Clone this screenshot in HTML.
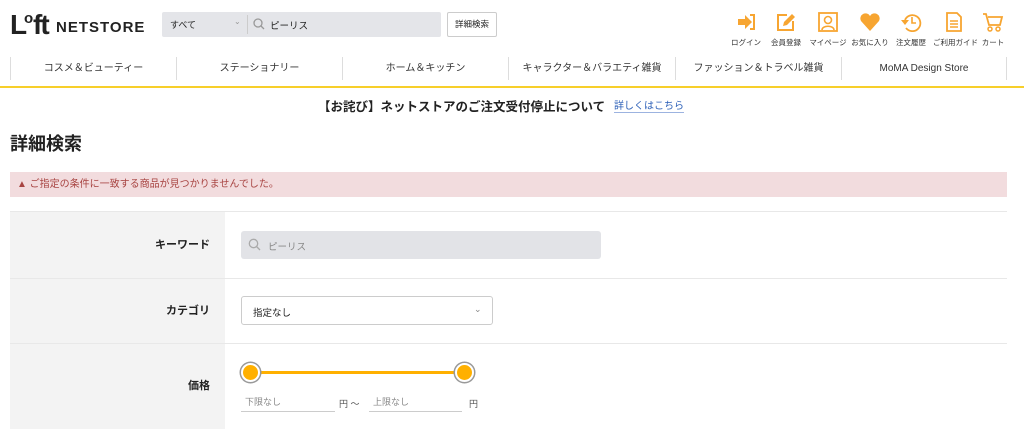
<!DOCTYPE html>
<html><head><meta charset="utf-8"><style>
*{margin:0;padding:0;box-sizing:border-box}
body{width:1024px;height:429px;overflow:hidden;background:#fff;font-family:"Liberation Sans","Noto Sans CJK JP",sans-serif;color:#222;position:relative}
.a{position:absolute}
.nav{top:57px;height:23px;font-size:10px;color:#333;text-align:center;line-height:23px;border-left:1px solid #ddd}
.ic{top:12px;width:40px;text-align:center;font-size:7.5px;color:#333;white-space:nowrap}
.ic svg{display:block;margin:0 auto 5px}
.lbl{left:10px;width:215px;background:#f3f3f3;font-size:11px;font-weight:bold;text-align:right;padding-right:15px}
.ln{left:10px;width:997px;height:1px;background:#e8e8e8}
</style></head><body>
<div class="a" style="left:10px;top:10px;font-size:28px;font-weight:bold;letter-spacing:-2px;line-height:30px">L</div>
<div class="a" style="left:24px;top:11px;font-size:15px;font-weight:bold;line-height:15px">o</div>
<div class="a" style="left:33px;top:10px;font-size:28px;font-weight:bold;letter-spacing:-2px;line-height:30px">ft</div>
<div class="a" style="left:56px;top:19px;font-size:15px;font-weight:bold;letter-spacing:1px">NETSTORE</div>
<div class="a" style="left:162px;top:12px;width:279px;height:25px;background:#e4e5e9;border-radius:2px"></div>
<div class="a" style="left:170px;top:18px;font-size:9px">すべて</div>
<div class="a" style="left:234px;top:17px;font-size:8px;color:#999">⌄</div>
<div class="a" style="left:247px;top:15px;width:1px;height:19px;background:#ccc"></div>
<svg class="a" style="left:253px;top:18px" width="12" height="12"><circle cx="5" cy="5" r="4" fill="none" stroke="#999" stroke-width="1.3"/><path d="M8 8l3 3" stroke="#999" stroke-width="1.3"/></svg>
<div class="a" style="left:270px;top:18px;font-size:9.5px">ピーリス</div>
<div class="a" style="left:447px;top:12px;width:50px;height:25px;border:1px solid #ccc;border-radius:2px;font-size:8.5px;text-align:center;line-height:23px">詳細検索</div>

<div class="a ic" style="left:726px"><svg width="22" height="20"><path d="M3 7h7V3l7 7-7 7v-4H3z" fill="#f7a531"/><path d="M15 3h4v14h-4" fill="none" stroke="#f7a531" stroke-width="2"/></svg>ログイン</div>
<div class="a ic" style="left:766px"><svg width="22" height="20"><path d="M12 3H3v15h15V9" fill="none" stroke="#f7a531" stroke-width="2"/><path d="M8 14l1-4 8-8 3 3-8 8z" fill="#f7a531"/></svg>会員登録</div>
<div class="a ic" style="left:808px"><svg width="22" height="20"><rect x="2" y="1" width="18" height="18" fill="none" stroke="#f7a531" stroke-width="1.8"/><circle cx="11" cy="8" r="3.5" fill="none" stroke="#f7a531" stroke-width="1.6"/><path d="M5 18c0-5 12-5 12 0" fill="none" stroke="#f7a531" stroke-width="1.6"/></svg>マイページ</div>
<div class="a ic" style="left:850px"><svg width="22" height="20"><path d="M11 19L2 9a5 5 0 0 1 9-5 5 5 0 0 1 9 5z" fill="#f7a531"/></svg>お気に入り</div>
<div class="a ic" style="left:891px"><svg width="22" height="20"><path d="M5 8a8 8 0 1 1 1 8" fill="none" stroke="#f7a531" stroke-width="1.8"/><path d="M1 8h8L5 13z" fill="#f7a531"/><path d="M12 5v6h4" fill="none" stroke="#f7a531" stroke-width="1.6"/></svg>注文履歴</div>
<div class="a ic" style="left:933px;width:42px"><svg width="22" height="20"><path d="M4 1h10l4 4v14H4z" fill="none" stroke="#f7a531" stroke-width="1.8"/><path d="M7 9h8M7 12h8M7 15h8" stroke="#f7a531" stroke-width="1.4"/></svg>ご利用ガイド</div>
<div class="a ic" style="left:973px"><svg width="22" height="20"><path d="M1 2h3l3 11h11l2-8H6" fill="none" stroke="#f7a531" stroke-width="1.8"/><circle cx="8" cy="17" r="2" fill="none" stroke="#f7a531" stroke-width="1.5"/><circle cx="16" cy="17" r="2" fill="none" stroke="#f7a531" stroke-width="1.5"/></svg>カート</div>

<div class="a nav" style="left:10px;width:166px">コスメ＆ビューティー</div>
<div class="a nav" style="left:176px;width:166px">ステーショナリー</div>
<div class="a nav" style="left:342px;width:166px">ホーム＆キッチン</div>
<div class="a nav" style="left:508px;width:167px">キャラクター＆バラエティ雑貨</div>
<div class="a nav" style="left:675px;width:166px">ファッション＆トラベル雑貨</div>
<div class="a nav" style="left:841px;width:166px;border-right:1px solid #ddd">MoMA Design Store</div>
<div class="a" style="left:0;top:86px;width:1024px;height:2px;background:#f7cf2a"></div>

<div class="a" style="left:318px;top:96px;font-size:12.5px;font-weight:bold">【お詫び】ネットストアのご注文受付停止について</div>
<div class="a" style="left:614px;top:97px;font-size:10px;color:#2b5fb8;border-bottom:1px solid #9cb3e0">詳しくはこちら</div>
<div class="a" style="left:10px;top:130px;font-size:18px;font-weight:bold">詳細検索</div>

<div class="a" style="left:10px;top:172px;width:997px;height:25px;background:#f2dcde;font-size:10px;color:#a84442;line-height:25px;padding-left:7px">▲ ご指定の条件に一致する商品が見つかりませんでした。</div>

<div class="ln a" style="top:211px"></div>
<div class="a lbl" style="top:212px;height:66px;line-height:66px">キーワード</div>
<div class="ln a" style="top:278px"></div>
<div class="a lbl" style="top:279px;height:64px;line-height:64px">カテゴリ</div>
<div class="ln a" style="top:343px"></div>
<div class="a lbl" style="top:344px;height:85px;line-height:85px">価格</div>

<div class="a" style="left:241px;top:231px;width:360px;height:28px;background:#e2e3e7;border-radius:3px"></div>
<svg class="a" style="left:248px;top:238px" width="13" height="13"><circle cx="5.5" cy="5.5" r="4.2" fill="none" stroke="#aaa" stroke-width="1.3"/><path d="M8.5 8.5l3.5 3.5" stroke="#aaa" stroke-width="1.3"/></svg>
<div class="a" style="left:268px;top:239px;font-size:9.5px;color:#888">ピーリス</div>

<div class="a" style="left:241px;top:296px;width:252px;height:29px;border:1px solid #ccc;border-radius:3px;background:#fff"></div>
<div class="a" style="left:253px;top:305px;font-size:9.5px">指定なし</div>
<div class="a" style="left:474px;top:304px;font-size:9px;color:#888">⌄</div>

<div class="a" style="left:250px;top:371px;width:214px;height:3px;background:#ffb000"></div>
<div class="a" style="left:241px;top:363px;width:19px;height:19px;border-radius:50%;background:#ffb000;border:2px solid #fff;box-shadow:0 0 0 1.5px #999"></div>
<div class="a" style="left:455px;top:363px;width:19px;height:19px;border-radius:50%;background:#ffb000;border:2px solid #fff;box-shadow:0 0 0 1.5px #999"></div>
<div class="a" style="left:241px;top:395px;width:94px;height:17px;border-bottom:1px solid #ccc;font-size:9px;color:#888;padding-left:4px">下限なし</div>
<div class="a" style="left:339px;top:397px;font-size:9px;color:#555">円 〜</div>
<div class="a" style="left:369px;top:395px;width:93px;height:17px;border-bottom:1px solid #ccc;font-size:9px;color:#888;padding-left:4px">上限なし</div>
<div class="a" style="left:469px;top:397px;font-size:9px;color:#555">円</div>
</body></html>
